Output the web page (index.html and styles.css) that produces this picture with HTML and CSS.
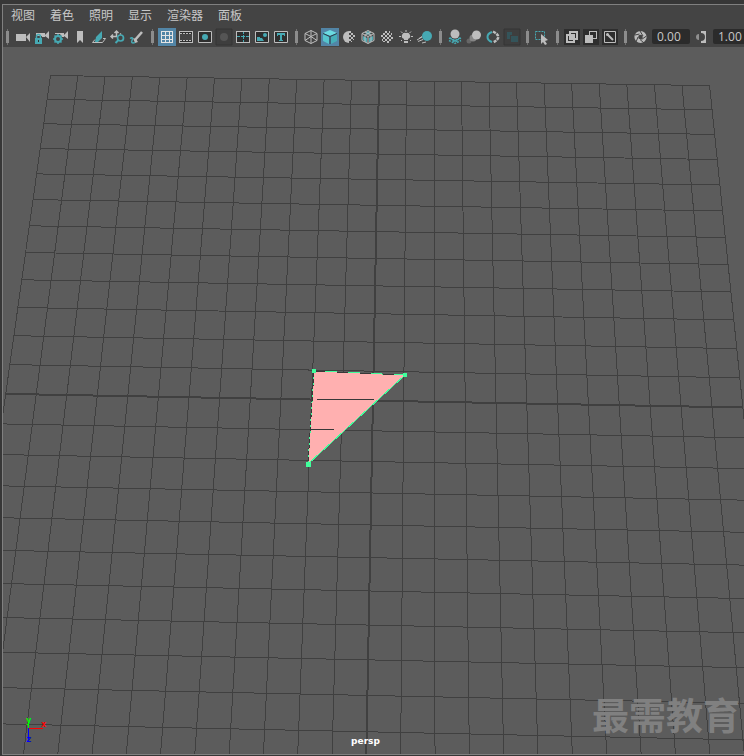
FILE: index.html
```html
<!DOCTYPE html>
<html lang="zh-CN">
<head>
<meta charset="utf-8">
<title>persp</title>
<link rel="stylesheet" href="styles.css">
</head>
<body>
<main class="panel">
  <nav class="menu" aria-label="面板菜单">
    <button type="button">视图</button>
    <button type="button">着色</button>
    <button type="button">照明</button>
    <button type="button">显示</button>
    <button type="button">渲染器</button>
    <button type="button">面板</button>
  </nav>

  <div class="toolbar" role="toolbar">
    <span class="sep"></span>
    <button type="button" class="tool"><svg viewBox="0 0 18 18"><path class="g" d="M2 6h10v7H2zM12 9l4-4v9z"/></svg></button>
    <button type="button" class="tool"><svg viewBox="0 0 18 18"><path class="g" d="M3 5h9v4H9V8H3zM12 7l4-4v8l-4-3z"/><path class="t" d="M2 10h7v6H2z"/><path class="ts" stroke-width="1.5" d="M3.500 10V8.500a2 2 0 0 1 4 0V10"/><path class="k" d="M5 12h1v2H5z"/></svg></button>
    <button type="button" class="tool"><svg viewBox="0 0 18 18"><path class="g" d="M3 5h9v4h-2L8 6H3zM12 7l4-4v8l-4-3z"/><circle class="ts" cx="6" cy="11" r="3" stroke-width="2"/><path class="ts" stroke-width="1.500" d="M6 6v2M6 14v2M1 11h2M9 11h2M2.500 7.500l1 1M8.500 13.500l1 1M9.500 7.500l-1 1M3.500 13.500l-1 1"/></svg></button>
    <button type="button" class="tool"><svg viewBox="0 0 18 18"><path class="g" d="M6 3h6v12l-3-3-3 3z"/></svg></button>
    <button type="button" class="tool"><svg viewBox="0 0 18 18"><path class="gs" d="M5 11.500 2.500 14.500h10l3-4H13"/><path class="t" d="M6 9l6-6v7l-4 4H5z"/></svg></button>
    <button type="button" class="tool"><svg viewBox="0 0 18 18"><path class="gs" stroke-width="1.500" d="M2 8.500h6M7.500 3v6M4 6.500l-2 2 2 2M5.500 5l2-2 2 2M11 6.500l1-1"/><circle class="ts" cx="11.500" cy="10" r="3" stroke-width="1.700"/><path class="ts" stroke-width="2" d="M9.500 12l-3 3"/></svg></button>
    <button type="button" class="tool"><svg viewBox="0 0 18 18"><path class="gs" stroke-width="2.500" d="M14 4 7 12"/><path class="g" d="M5 10l3 1 2 3-3 1z"/><path class="ts" stroke-width="1.500" d="M2 10.500c3-2 3 0 2 2s0 3 3 2"/></svg></button>
    <span class="sep"></span>
    <button type="button" class="tool on"><svg viewBox="0 0 18 18" shape-rendering="crispEdges"><path class="ws" d="M3.500 3.500h11v11h-11zM3 7.500h12M3 11.500h12M7.500 3v12M11.500 3v12"/></svg></button>
    <button type="button" class="tool"><svg viewBox="0 0 18 18" shape-rendering="crispEdges"><path class="k" d="M2 3h14v12H2z"/><path fill="#444" d="M3 6h12v6H3z"/><path class="gs" d="M2.500 3.500h13v11h-13z"/><path class="gs" stroke-dasharray="2 1" d="M3 5.500h12M3 12.500h12"/></svg></button>
    <button type="button" class="tool"><svg viewBox="0 0 18 18"><path class="k" d="M2 3h14v12H2z"/><path class="gs" d="M2.500 3.500h13v11h-13z"/><circle class="t" cx="9" cy="9" r="3"/></svg></button>
    <button type="button" class="tool off"><svg viewBox="0 0 18 18"><path class="d" d="M1 1h16v16H1z"/><circle cx="9" cy="9" r="4" fill="#555"/></svg></button>
    <button type="button" class="tool"><svg viewBox="0 0 18 18" shape-rendering="crispEdges"><path class="k" d="M2 3h14v12H2z"/><path class="gs" d="M2.500 3.500h13v11h-13z"/><path class="ts" d="M3 8.500h3M7 8.500h4M12 8.500h3M9.500 4v2M9.500 7v4M9.500 12v2"/></svg></button>
    <button type="button" class="tool"><svg viewBox="0 0 18 18"><path class="k" d="M2 3h14v12H2z"/><path class="gs" d="M2.500 3.500h13v11h-13z"/><circle class="t" cx="12" cy="7" r="2"/><path class="t" d="M4 13V9h3v1h2l2 3z"/></svg></button>
    <button type="button" class="tool"><svg viewBox="0 0 18 18"><path class="k" d="M2 3h14v12H2z"/><path class="gs" d="M2.500 3.500h13v11h-13z"/><path class="t" d="M5 5h8v3h-1V7h-2v5h1v1H7v-1h1V7H6v1H5z"/></svg></button>
    <span class="sep"></span>
    <button type="button" class="tool"><svg viewBox="0 0 18 18"><path class="gs" d="M9 2.500l6 3v7l-6 3-6-3v-7zM3 5.500l6 3 6-3M9 8.500v7M9 2.500v6M3 12.500l6-4 6 4"/></svg></button>
    <button type="button" class="tool on"><svg viewBox="0 0 18 18"><path fill="#6bdbe2" d="M9 2l7 3-7 3-7-3z"/><path fill="#55c5cd" d="M2 6l6 3v7l-6-3z"/><path fill="#46afb8" d="M16 6l-6 3v7l6-3z"/><path stroke="#28434e" fill="none" d="M2 5.500l7 3 7-3M9 8.500V16"/></svg></button>
    <button type="button" class="tool"><svg viewBox="0 0 18 18"><path class="g" d="M9 3a6 6 0 0 0 0 12z"/><path class="g" d="M9 3h2v2H9zM11 5h2v2h-2zM9 7h2v2H9zM13 7h2v2h-2zM11 9h2v2h-2zM9 11h2v2H9zM13 11h1v1h-1zM11 13h1v1h-1z"/></svg></button>
    <button type="button" class="tool"><svg viewBox="0 0 18 18"><path class="t" d="M6 5l3-2 3 2-3 2zM4 8l4 2v5l-4-3zM10 10l4-2v4l-4 3z"/><path class="gs" d="M9 2.500l6 3v7l-6 3-6-3v-7zM3 5.500l6 3 6-3M9 8.500v7M6 4l6 3v7M12 4 6 7v7"/></svg></button>
    <button type="button" class="tool"><svg viewBox="0 0 18 18" shape-rendering="crispEdges"><path class="g" d="M7 3h2v2H7zM11 3h1v2h-1zM5 5h2v2H5zM9 5h2v2H9zM13 5h1v2h-1zM3 7h2v2H3zM7 7h2v2H7zM11 7h2v2h-2zM5 9h2v2H5zM9 9h2v2H9zM13 9h2v2h-2zM4 11h1v2H4zM7 11h2v2H7zM11 11h2v2h-2zM5 13h2v1H5zM9 13h2v2H9z"/></svg></button>
    <button type="button" class="tool"><svg viewBox="0 0 18 18"><path class="g" d="M9 5a3 3 0 0 1 2 6v1H7v-1a3 3 0 0 1 2-6zM7 13h4v2H7z"/><path class="gs" d="M9 2v2M2 8.500h2M14 8.500h2M4 3.500l1.500 1.500M14 3.500 12.500 5M4 13l1-1M14 13l-1-1"/></svg></button>
    <button type="button" class="tool"><svg viewBox="0 0 18 18"><circle class="t" cx="11" cy="8" r="5"/><path class="gs" d="M6 8.500l-3 2M7 11.500l-5 2M1 12l5-3M10 14l-4 1"/></svg></button>
    <span class="sep"></span>
    <button type="button" class="tool"><svg viewBox="0 0 18 18"><path class="ts" stroke-width="1.500" stroke-dasharray="2 1" d="M3 10l6 3 6-3M3 12.500l6 3 6-3M4 10l8 4M14 10l-8 4"/><circle class="g" cx="9" cy="6" r="4.500"/></svg></button>
    <button type="button" class="tool"><svg viewBox="0 0 18 18"><circle cx="4" cy="13" r="2.500" fill="#666"/><circle cx="8" cy="10" r="3.500" fill="#858585"/><circle class="g" cx="11.500" cy="7" r="4.500"/></svg></button>
    <button type="button" class="tool"><svg viewBox="0 0 18 18"><path class="ts" stroke-width="2" d="M8 4C2 6 2 12 8 14"/><path class="gs" stroke-width="2.500" stroke-dasharray="3 1" d="M9 3.500C16 7 16 11 9 14.500"/></svg></button>
    <button type="button" class="tool off"><svg viewBox="0 0 18 18"><path class="d" d="M1 1h16v16H1z"/><path fill="#34545a" d="M4 4h5v3H7v4H4zM8 8h7v6H8z"/></svg></button>
    <span class="sep"></span>
    <button type="button" class="tool"><svg viewBox="0 0 18 18"><path class="ts" stroke-dasharray="2 1" d="M2.500 3.500h9v8h-9z"/><path class="g" d="M8 6l7 6-3 1 2 3-2 1-2-3-2 2z"/></svg></button>
    <span class="sep"></span>
    <button type="button" class="tool"><svg viewBox="0 0 18 18" shape-rendering="crispEdges"><path class="k" d="M1 1h16v16H1z"/><path class="gs" stroke-width="2" d="M7 4h7v7H7zM4 7h7v7H4z"/><path class="g" d="M8 8h2v2H8z"/></svg></button>
    <button type="button" class="tool"><svg viewBox="0 0 18 18" shape-rendering="crispEdges"><path class="k" d="M1 1h16v16H1z"/><path class="gs" d="M7.500 3.500h7v7h-7z"/><path class="g" d="M3 7h8v8H3z"/></svg></button>
    <button type="button" class="tool"><svg viewBox="0 0 18 18"><path class="k" d="M1 1h16v16H1z"/><path class="gs" d="M3.500 3.500h11v11h-11z"/><path class="gs" stroke-width="2" d="M6 6l6 6"/><circle class="g" cx="6.500" cy="6.500" r="1.500"/></svg></button>
    <span class="sep"></span>
    <button type="button" class="tool"><svg viewBox="0 0 18 18"><circle cx="9.500" cy="9" r="4.200" fill="none" stroke="#bdbdbd" stroke-width="3.800"/><path stroke="#444" stroke-width="1" d="M9 3l3 5M15.500 8l-5 3.500M13 15l-4-3.500M5 14l2-5M4 7l4.500-1"/></svg></button>
    <input class="value" type="text" value="0.00" aria-label="曝光">
    <button type="button" class="tool"><svg viewBox="0 0 18 18"><path class="g" d="M9 3h5v12H9v-2a4 4 0 0 0 0-8z"/><path fill="#8f8f8f" d="M7 6v6a3 3 0 0 1 0-6z"/></svg></button>
    <input class="value" type="text" value="1.00" aria-label="伽马">
  </div>

  <section class="viewport">
    <svg class="scene" viewBox="3 47 741 707" preserveAspectRatio="xMidYMid slice" aria-label="persp">
      <g id="grid" class="grid"></g>
      <path class="face" d="M314 371 405 375 308 464z"/>
      <path class="cover" d="M317 399.500h57M311 429.500h23"/>
      <path class="edge-dark" d="M314 371 405 375M314 371 308 464"/>
      <path class="edge" stroke-dasharray="12 11" d="M325 371.500 405 375"/>
      <path class="edge" stroke-dasharray="2 4" d="M314 371 308 464"/>
      <path class="edge" d="M405 375 308 464"/>
      <path class="vertex" d="M312 369h4v4h-4zM403 373h4v4h-4zM306 462h5v5h-5z"/>
      <g class="axis">
        <path stroke="#f00" d="M29 728.500h14"/>
        <path stroke="#00f" d="M28.500 728v12"/>
        <path stroke="#0f0" d="M28.500 723v5"/>
        <text x="26" y="723" fill="#0f0">y</text>
        <text x="41" y="727" fill="#f00">x</text>
        <text x="26" y="742" fill="#00f">z</text>
      </g>
    </svg>
    <span class="camera">persp</span>
    <span class="watermark">最需教育</span>
  </section>
</main>
<script src="grid.js"></script>
</body>
</html>
```
FILE: styles.css
```css
* {
  box-sizing: border-box;
}

body {
  margin: 0;
  background: #373737;
  color: #c8c8c8;
  font-family: "Open Sans", "Noto Sans CJK SC", sans-serif;
  font-size: 12px;
}

.panel {
  display: flex;
  flex-direction: column;
  height: 100vh;
  border: solid #373737;
  border-width: 4px 0 1px 2px;
  overflow: hidden;
  background: #444;
}

.menu {
  display: flex;
  gap: 15px;
  height: 23px;
  padding-left: 8px;
  border-top: 1px solid #808080;
  border-left: 1px solid #808080;
}

button {
  margin: 0;
  padding: 0;
  border: 0;
  background: none;
  color: inherit;
  font: inherit;
  white-space: nowrap;
}

.menu button {
  height: 21px;
  line-height: 20px;
}

.toolbar {
  display: flex;
  align-items: center;
  height: 20px;
  padding-bottom: 1px;
  border-left: 1px solid #808080;
  overflow: hidden;
}

.sep {
  flex: none;
  width: 11px;
  height: 16px;
  background:
    linear-gradient(#8c8c8c, #8c8c8c) center / 3px 12px no-repeat,
    linear-gradient(#707070, #707070) center / 1px 16px no-repeat;
}

.sep:first-child {
  width: 9px;
  margin-right: 2px;
}

.tool {
  flex: none;
  width: 18px;
  height: 18px;
  margin-right: 1px;
}

.tool svg {
  display: block;
  width: 18px;
  height: 18px;
}

.tool.on {
  background: #5285a6;
}

.g { fill: #bdbdbd; }
.t { fill: #46a9b3; }
.k { fill: #2e2e2e; }
.gs { fill: none; stroke: #bdbdbd; }
.ts { fill: none; stroke: #46a9b3; }
.ws { fill: none; stroke: #e4e4e4; }
.d { fill: #3e3e3e; stroke: #353535; }

.value {
  flex: none;
  width: 38px;
  height: 15px;
  margin: 0 2px;
  padding: 0 5px;
  border: 0;
  border-radius: 2px;
  background: #2b2b2b;
  color: #c8c8c8;
  font: 12px "Open Sans", sans-serif;
}

.viewport {
  position: relative;
  flex: 1;
  min-height: 0;
  border: solid #808080;
  border-width: 0 0 1px 1px;
  background: #5c5c5c;
}

.scene {
  display: block;
  width: 100%;
  height: 100%;
}

.grid {
  fill: none;
  stroke: #404040;
  shape-rendering: crispEdges;
}

.grid .main {
  stroke-width: 2px;
}

.face {
  fill: #ffb0b0;
  shape-rendering: crispEdges;
}

.cover,
.edge-dark {
  fill: none;
  stroke: #383838;
  shape-rendering: crispEdges;
}

.edge {
  fill: none;
  stroke: #40ff9c;
  shape-rendering: crispEdges;
}

.vertex {
  fill: #40ff9c;
}

.axis {
  font: bold 9px "DejaVu Sans Mono", monospace;
}

.camera {
  position: absolute;
  bottom: 7px;
  left: 0;
  width: 100%;
  padding-right: 16px;
  color: #fff;
  font: bold 9px/12px "DejaVu Sans", sans-serif;
  text-align: center;
}

.watermark {
  position: absolute;
  right: 4px;
  bottom: 21px;
  color: #808080;
  font: bold 37px/38px "Noto Sans CJK SC", sans-serif;
}
```
FILE: grid.js
```js
// Ground plane of 24 x 24 cells, projected with the camera's perspective.
const CELLS = 24;

function project(u, v) {
  const depth = 1 - 0.00026 * u - 0.0088 * v;
  const x = (27.278 * u - 3.7835 * v + 50.5) / depth;
  const y = (0.3986 * u + 23.07 * v + 75.5) / depth;
  return x.toFixed(1) + " " + y.toFixed(1);
}

function addLine(from, to, main) {
  const path = document.createElementNS("http://www.w3.org/2000/svg", "path");
  path.setAttribute("d", "M" + from + "L" + to);
  if (main) path.setAttribute("class", "main");
  document.getElementById("grid").appendChild(path);
}

for (let i = 0; i <= CELLS; i++) {
  const main = i === CELLS / 2;
  addLine(project(i, 0), project(i, CELLS), main);
  addLine(project(0, i), project(CELLS, i), main);
}
```
